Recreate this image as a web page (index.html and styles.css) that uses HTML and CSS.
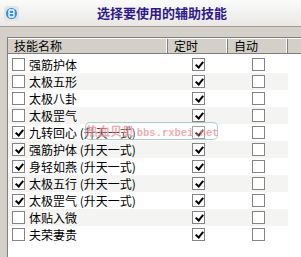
FILE: index.html
```
<!DOCTYPE html>
<html>

<head>
    <title>选择要使用的辅助技能</title>
    <link rel="stylesheet" href="styles.css">
</head>

<body>
    <div id="window">
        <div class="titlebar">
            <span class="appicon">
                <svg width="13" height="13" viewBox="0 0 13 13">
                    <circle cx="6.5" cy="6.5" r="5.5" fill="#2d8ee0"/>
                    <rect x="4" y="3" width="5" height="7" rx="1" fill="none" stroke="#fff" stroke-width="1.3"/>
                    <line x1="4" y1="6.5" x2="9" y2="6.5" stroke="#fff" stroke-width="1.2"/>
                </svg>
            </span>
            <h3 class="title">选择要使用的辅助技能</h3>
        </div>
        <div class="panel">
            <div class="header">
                <span class="col">技能名称</span>
                <span class="col">定时</span>
                <span class="col">自动</span>
                <span class="col last"></span>
            </div>
            <div class="rows">
                <div class="row"><span class="name"><i class="cb"></i>强筋护体</span><span class="cell"><i class="cb on"></i></span><span class="cell"><i class="cb"></i></span></div>
                <div class="row"><span class="name"><i class="cb"></i>太极五形</span><span class="cell"><i class="cb on"></i></span><span class="cell"><i class="cb"></i></span></div>
                <div class="row"><span class="name"><i class="cb"></i>太极八卦</span><span class="cell"><i class="cb on"></i></span><span class="cell"><i class="cb"></i></span></div>
                <div class="row"><span class="name"><i class="cb"></i>太极罡气</span><span class="cell"><i class="cb on"></i></span><span class="cell"><i class="cb"></i></span></div>
                <div class="row"><span class="name"><i class="cb on"></i>九转回心 (升天一式)</span><span class="cell"><i class="cb on"></i></span><span class="cell"><i class="cb"></i></span></div>
                <div class="row"><span class="name"><i class="cb on"></i>强筋护体 (升天一式)</span><span class="cell"><i class="cb on"></i></span><span class="cell"><i class="cb"></i></span></div>
                <div class="row"><span class="name"><i class="cb on"></i>身轻如燕 (升天一式)</span><span class="cell"><i class="cb on"></i></span><span class="cell"><i class="cb"></i></span></div>
                <div class="row"><span class="name"><i class="cb on"></i>太极五行 (升天一式)</span><span class="cell"><i class="cb on"></i></span><span class="cell"><i class="cb"></i></span></div>
                <div class="row"><span class="name"><i class="cb on"></i>太极罡气 (升天一式)</span><span class="cell"><i class="cb on"></i></span><span class="cell"><i class="cb"></i></span></div>
                <div class="row"><span class="name"><i class="cb"></i>体贴入微</span><span class="cell"><i class="cb on"></i></span><span class="cell"><i class="cb"></i></span></div>
                <div class="row"><span class="name"><i class="cb"></i>夫荣妻贵</span><span class="cell"><i class="cb on"></i></span><span class="cell"><i class="cb"></i></span></div>
            </div>
            <!-- forum watermark over the list -->
            <div class="watermark"><span class="wm-cn">热血贝贝</span> <span class="wm-en">bbs.rxbei.net</span></div>
        </div>
    </div>
</body>

</html>
```

FILE: styles.css
```
* {
    box-sizing: border-box;
}

body {
    margin: 0;
    background: #d4d0c8;
    font-family: "Noto Sans CJK SC", "DejaVu Sans", sans-serif;
    font-size: 12px;
    overflow: hidden;
}

#window {
    width: 301px;
    height: 257px;
    display: flex;
    flex-direction: column;
}

.titlebar {
    height: 27px;
    display: flex;
    align-items: center;
    background: linear-gradient(#fbfbfa, #e9e8e5);
    border-bottom: 1px solid #a09d96;
}

.appicon {
    width: 15px;
    height: 15px;
    margin-left: 4px;
    display: flex;
    align-items: center;
    justify-content: center;
    background: #e4e4e4;
    border-radius: 3px;
}

.title {
    margin: 0 0 0 78px;
    font-size: 13px;
    font-weight: bold;
    color: #2e1a8e;
    line-height: 14px;
}

.panel {
    position: relative;
    flex: 1;
    margin: 10px 0 0 7px;
    background: #fff;
    border-left: 1px solid #808080;
    border-top: 1px solid #808080;
}

.header {
    display: grid;
    grid-template-columns: 160px 60px 60px 1fr;
    height: 16px;
    background: #d4d0c8;
    border-top: 1px solid #fff;
    border-bottom: 1px solid #808080;
}

.col {
    padding-left: 6px;
    line-height: 14px;
    color: #000;
    border-right: 1px solid #808080;
    box-shadow: inset -1px 0 0 #fff;
}

.col.last {
    border-right: none;
    box-shadow: none;
}

.rows {
    margin-top: 2px;
    width: 280px;
}

.row {
    display: grid;
    grid-template-columns: 160px 60px 60px;
    height: 17px;
    align-items: center;
}

.row:nth-child(even) {
    background: #f4f4f2;
}

.name {
    display: flex;
    align-items: center;
    gap: 4px;
    padding-left: 4px;
    white-space: nowrap;
    line-height: 17px;
}

.cell {
    display: flex;
    justify-content: center;
}

.cb {
    position: relative;
    width: 13px;
    height: 13px;
    border: 1px solid #848484;
    background: #fff;
    flex: none;
}

.cb.on::after {
    content: "";
    position: absolute;
    left: 4px;
    top: 1px;
    width: 3px;
    height: 6px;
    border-right: 2px solid #000;
    border-bottom: 2px solid #000;
    transform: rotate(40deg);
}

.watermark {
    position: absolute;
    left: 77px;
    top: 84px;
    width: 133px;
    height: 18px;
    border: 1px solid rgba(140, 185, 190, 0.7);
    border-radius: 5px;
    background: rgba(255, 255, 255, 0.25);
    color: rgba(236, 140, 150, 0.75);
    font-weight: bold;
    line-height: 16px;
    white-space: nowrap;
    padding-left: 0;
}

.wm-en {
    font-family: "Liberation Mono", monospace;
    font-size: 10.5px;
}
```
